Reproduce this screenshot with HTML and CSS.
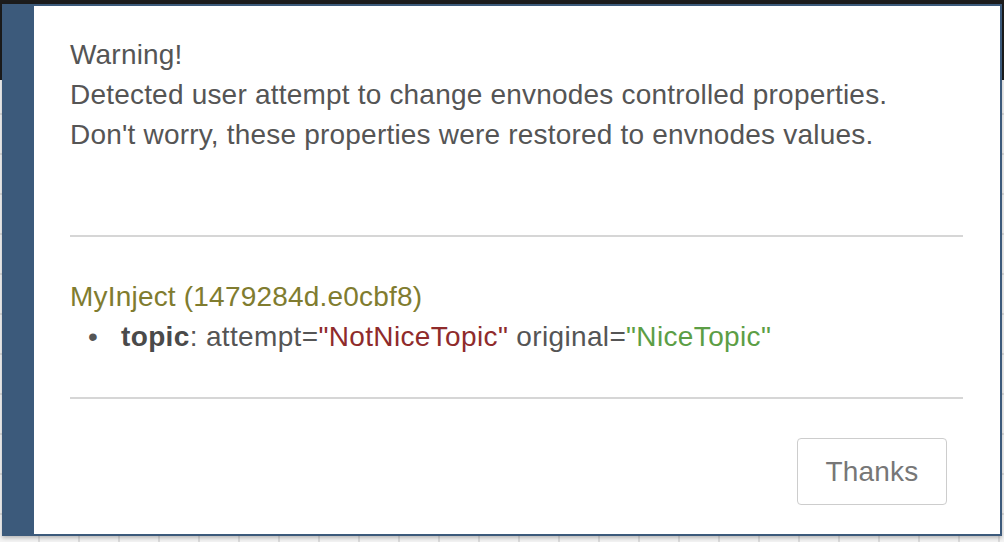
FILE: index.html
```html
<!DOCTYPE html>
<html>
<head>
<meta charset="utf-8">
<link rel="stylesheet" href="styles.css">
</head>
<body>
<div class="workspace">
  <div class="topbar"></div>
  <div class="canvas"></div>
</div>
<div class="dialog">
  <div class="dialog-body">
    <div class="message">
      <div>Warning!</div>
      <div>Detected user attempt to change envnodes controlled properties.</div>
      <div>Don't worry, these properties were restored to envnodes values.</div>
    </div>
    <hr class="divider">
    <div class="details">
      <div class="node-name">MyInject (1479284d.e0cbf8)</div>
      <ul class="props">
        <li><b>topic</b>: attempt=<span class="bad">"NotNiceTopic"</span> original=<span class="good">"NiceTopic"</span></li>
      </ul>
    </div>
    <hr class="divider">
    <div class="actions">
      <button class="btn">Thanks</button>
    </div>
  </div>
</div>
</body>
</html>
```
FILE: styles.css
```css
html, body {
  margin: 0;
  padding: 0;
}
body {
  width: 1004px;
  height: 542px;
  overflow: hidden;
  position: relative;
  font-family: "Liberation Sans", Arial, sans-serif;
  background: #f3f3f3;
}
.workspace {
  display: flex;
  flex-direction: column;
  height: 542px;
}
.topbar {
  height: 80px;
  background: #1c1c1c;
  flex: none;
}
.canvas {
  flex: 1;
  background-color: #f4f4f4;
  background-image:
    linear-gradient(to right, #dcdcdc 2px, transparent 2px),
    linear-gradient(to bottom, #dcdcdc 2px, transparent 2px);
  background-size: 40px 40px;
  background-position: -2px 33px;
}
.dialog {
  position: absolute;
  left: 2px;
  top: 4px;
  width: 1000px;
  height: 532px;
  box-sizing: border-box;
  background: #3c5a7b;
  padding: 2px 2px 2px 32px;
  box-shadow: 0 2px 4px rgba(0,0,0,0.25);
}
.dialog-body {
  background: #fff;
  height: 100%;
  box-sizing: border-box;
  padding: 29px 37px 0 36px;
  display: flex;
  flex-direction: column;
  color: #555;
  font-size: 28px;
  line-height: 40px;
  letter-spacing: 0.2px;
}
.message {
  height: 200px;
}
.divider {
  border: 0;
  border-top: 2px solid #d6d6d6;
  margin: 0;
  height: 0;
}
.details {
  padding-top: 40px;
  height: 120px;
}
.node-name {
  color: #807c2f;
}
.props {
  margin: 0;
  padding-left: 51px;
  list-style: none;
}
.props li {
  letter-spacing: 0.35px;
}
.props li::before {
  content: "\2022";
  display: inline-block;
  width: 33px;
  margin-left: -33px;
  color: #555;
}
.props b {
  color: #4a4a4a;
}
.bad { color: #8f2b2b; }
.good { color: #5c9e45; }
.actions {
  display: flex;
  justify-content: flex-end;
  padding-top: 39px;
  padding-right: 16px;
}
.btn {
  width: 150px;
  height: 67px;
  background: #fff;
  border: 1px solid #cdcdcd;
  border-radius: 4px;
  font-family: "Liberation Sans", Arial, sans-serif;
  font-size: 28px;
  letter-spacing: 0.2px;
  color: #777;
  padding: 0;
}
```
